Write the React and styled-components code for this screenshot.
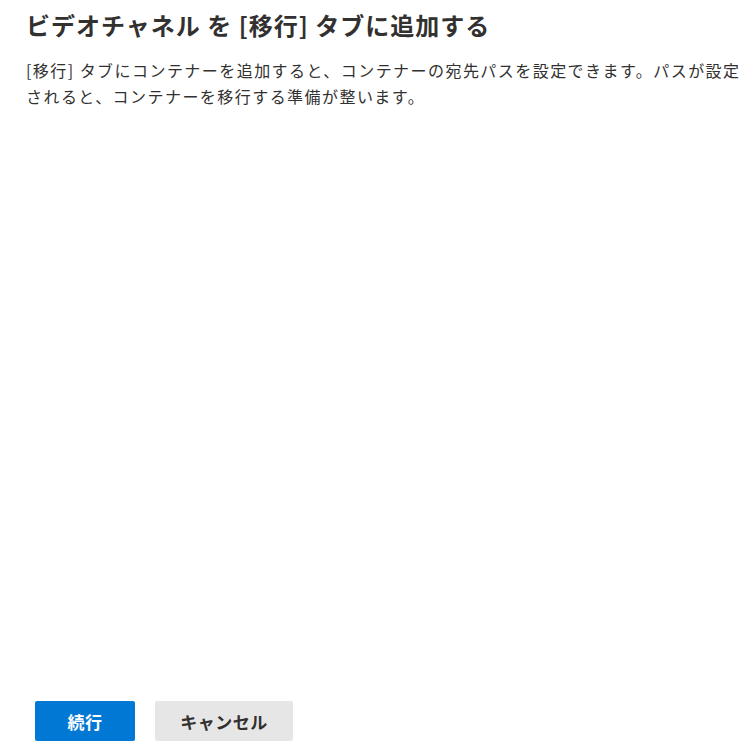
import React from "react";
import styled, { createGlobalStyle } from "styled-components";

const GlobalStyle = createGlobalStyle`
  html, body {
    margin: 0;
    padding: 0;
    background: #fff;
  }
  body {
    font-family: "Noto Sans CJK JP", "Noto Sans", sans-serif;
    color: #323130;
  }
`;

const Page = styled.div`
  display: flex;
  flex-direction: column;
  min-height: 100vh;
  box-sizing: border-box;
  padding: 7px 8px 5px 26px;
`;

const Content = styled.div`
  flex: 1;
`;

const Title = styled.h1`
  margin: 0;
  font-size: 24px;
  line-height: 36px;
  font-weight: 700;
  letter-spacing: 1px;
  color: #323130;
`;

const Description = styled.p`
  margin: 14px 0 0;
  font-size: 16px;
  line-height: 26px;
  font-weight: 400;
  letter-spacing: 1.45px;
  color: #323130;
`;

const Footer = styled.div`
  display: flex;
  gap: 20px;
  padding-left: 9px;
`;

const Button = styled.button`
  height: 40px;
  min-width: ${(p) => p.$width}px;
  padding: 0 16px;
  border: none;
  border-radius: 2px;
  font-family: "Noto Sans CJK JP", "Noto Sans", sans-serif;
  font-size: 17px;
  font-weight: 700;
  letter-spacing: 0.5px;
  cursor: pointer;
  background: ${(p) => (p.$primary ? "#0078d4" : "#e6e6e6")};
  color: ${(p) => (p.$primary ? "#ffffff" : "#323130")};
`;

export default function App() {
  return (
    <>
      <GlobalStyle />
      <Page>
        <Content>
          <Title>ビデオチャネル を [移行] タブに追加する</Title>
          <Description>
            [移行] タブにコンテナーを追加すると、コンテナーの宛先パスを設定できます。パスが設定されると、コンテナーを移行する準備が整います。
          </Description>
        </Content>
        <Footer>
          <Button $primary $width={100}>続行</Button>
          <Button $width={138}>キャンセル</Button>
        </Footer>
      </Page>
    </>
  );
}
